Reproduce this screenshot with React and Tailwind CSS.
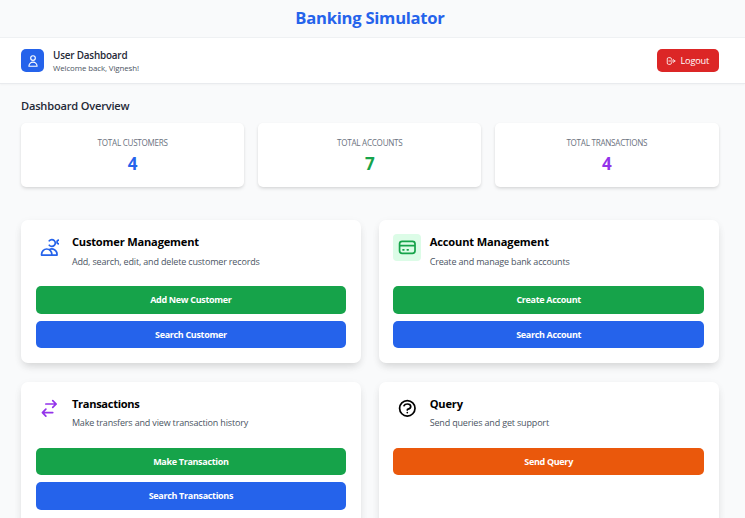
const ICONS = {
  user: ["M16 7a4 4 0 11-8 0 4 4 0 018 0z", "M12 14a7 7 0 00-7 7h14a7 7 0 00-7-7z"],
  logout: ["M17 16l4-4m0 0l-4-4m4 4H7m6 4v1a3 3 0 01-3 3H6a3 3 0 01-3-3V7a3 3 0 013-3h4a3 3 0 013 3v1"],
  customers: ["M12 4.354a4 4 0 110 5.292M15 21H3v-1a6 6 0 0112 0v1zm0 0h6v-1a6 6 0 00-9-5.197m13.5-9a2.25 2.25 0 11-4.5 0 2.25 2.25 0 014.5 0z"],
  card: ["M3 10h18M7 15h1m4 0h1m-7 4h12a3 3 0 003-3V8a3 3 0 00-3-3H6a3 3 0 00-3 3v8a3 3 0 003 3z"],
  transfer: ["M8 7h12m0 0l-4-4m4 4l-4 4m0 6H4m0 0l4 4m-4-4l4-4"],
  query: ["M8.228 9c.549-1.165 2.03-2 3.772-2 2.21 0 4 1.343 4 3 0 1.4-1.278 2.575-3.006 2.907-.542.104-.994.54-.994 1.093m0 3h.01M21 12a9 9 0 11-18 0 9 9 0 0118 0z"],
};

function Icon({ name, className }) {
  return (
    <svg className={className} viewBox="0 0 24 24" fill="none" stroke="currentColor" strokeWidth="2" strokeLinecap="round" strokeLinejoin="round">
      {ICONS[name].map((d) => <path key={d} d={d} />)}
    </svg>
  );
}

const stats = [
  { label: "TOTAL CUSTOMERS", value: 4, color: "text-[#2563eb]" },
  { label: "TOTAL ACCOUNTS", value: 7, color: "text-[#16a34a]" },
  { label: "TOTAL TRANSACTIONS", value: 4, color: "text-[#9333ea]" },
];

const GREEN = "bg-[#16a34a]";
const BLUE = "bg-[#2563eb]";
const ORANGE = "bg-[#ea580c]";

const sections = [
  {
    title: "Customer Management", text: "Add, search, edit, and delete customer records",
    icon: "customers", tile: "text-[#2563eb]", tracking: "tracking-[-0.18px]",
    actions: [["Add New Customer", GREEN], ["Search Customer", BLUE]],
  },
  {
    title: "Account Management", text: "Create and manage bank accounts",
    icon: "card", tile: "bg-[#dcfce7] text-[#16a34a]", tracking: "tracking-[-0.14px]",
    actions: [["Create Account", GREEN], ["Search Account", BLUE]],
  },
  {
    title: "Transactions", text: "Make transfers and view transaction history",
    icon: "transfer", tile: "text-[#9333ea]", tracking: "tracking-[-0.3px]",
    actions: [["Make Transaction", GREEN], ["Search Transactions", BLUE]],
  },
  {
    title: "Query", text: "Send queries and get support",
    icon: "query", tile: "text-black", tracking: "tracking-[-0.15px]",
    actions: [["Send Query", ORANGE]],
  },
];

export default function App() {
  return (
    <div className="h-[518px] overflow-hidden bg-[#f9fafb] font-['Open_Sans','Noto_Sans',sans-serif]">
      <div className="flex h-[38px] items-start justify-center border-b border-[#eff1f3] pr-[5px] pt-[6px]">
        <h1 className="text-[16.6px] font-bold leading-6 tracking-[-0.25px] text-[#2563eb]">Banking Simulator</h1>
      </div>
      <header className="flex h-[46px] items-center justify-between border-b border-[#e9ebee] bg-white pl-[21px] pr-[26.5px] shadow-[0_1px_2px_rgba(0,0,0,0.03)]">
        <div className="flex items-center gap-[9px]">
          <div className="flex size-[23px] items-center justify-center rounded-[5px] bg-[#2563eb] text-white">
            <Icon name="user" className="size-[14px]" />
          </div>
          <div>
            <h2 className="text-[9.9px] font-semibold leading-[14px] tracking-[-0.19px] text-[#1f2937]">User Dashboard</h2>
            <p className="text-[7.9px] leading-3 tracking-[-0.1px] text-[#4b5563]">Welcome back, Vignesh!</p>
          </div>
        </div>
        <button className="flex h-[23px] w-[61.5px] items-center gap-[4.5px] rounded-[5px] bg-[#dc2626] pl-[9px] text-[9.2px] font-medium tracking-[-0.2px] text-white">
          <Icon name="logout" className="size-[10px]" />
          Logout
        </button>
      </header>
      <main className="pl-[21px] pr-[26.5px] pt-[13px]">
        <h2 className="text-[11.1px] font-semibold leading-[18px] tracking-[-0.2px] text-[#1f2937]">Dashboard Overview</h2>
        <div className="mt-[8px] grid grid-cols-3 gap-[13.7px]">
          {stats.map((s) => (
            <div key={s.label} className="h-[64px] rounded-[5px] bg-white pt-[13.5px] text-center shadow-[0_2px_4px_-1px_rgba(0,0,0,0.14),0_1px_3px_rgba(0,0,0,0.05)]">
              <p className="text-[8.1px] leading-3 tracking-[-0.26px] text-[#6b7280]">{s.label}</p>
              <p className={"mt-[4.4px] text-[17px] font-bold leading-[22px] " + s.color}>{s.value}</p>
            </div>
          ))}
        </div>
        <div className="mt-[33px] grid grid-cols-2 gap-x-[18px] gap-y-[19px]">
          {sections.map((s) => (
            <section key={s.title} className="h-[142.5px] rounded-[7px] bg-white px-[14.5px] pt-[13.5px] shadow-[0_5px_8px_-2px_rgba(0,0,0,0.13),0_2px_10px_rgba(0,0,0,0.04)]">
              <div className="flex gap-[9px]">
                <div className={"flex size-[27.4px] items-center justify-center rounded-[4px] " + s.tile}>
                  <Icon name={s.icon} className="size-[20.6px]" />
                </div>
                <div className="pt-[0.8px]">
                  <h3 className={"text-[11.1px] font-bold leading-4 text-black " + s.tracking}>{s.title}</h3>
                  <p className="mt-[4.3px] text-[9px] leading-[14px] tracking-[-0.17px] text-[#4b5563]">{s.text}</p>
                </div>
              </div>
              <div className="mt-[17.8px] flex flex-col gap-[7px]">
                {s.actions.map(([label, bg]) => (
                  <button key={label} className={"h-[27.5px] rounded-[5px] text-[9px] font-bold tracking-[-0.32px] text-white " + bg}>{label}</button>
                ))}
              </div>
            </section>
          ))}
        </div>
      </main>
    </div>
  );
}
